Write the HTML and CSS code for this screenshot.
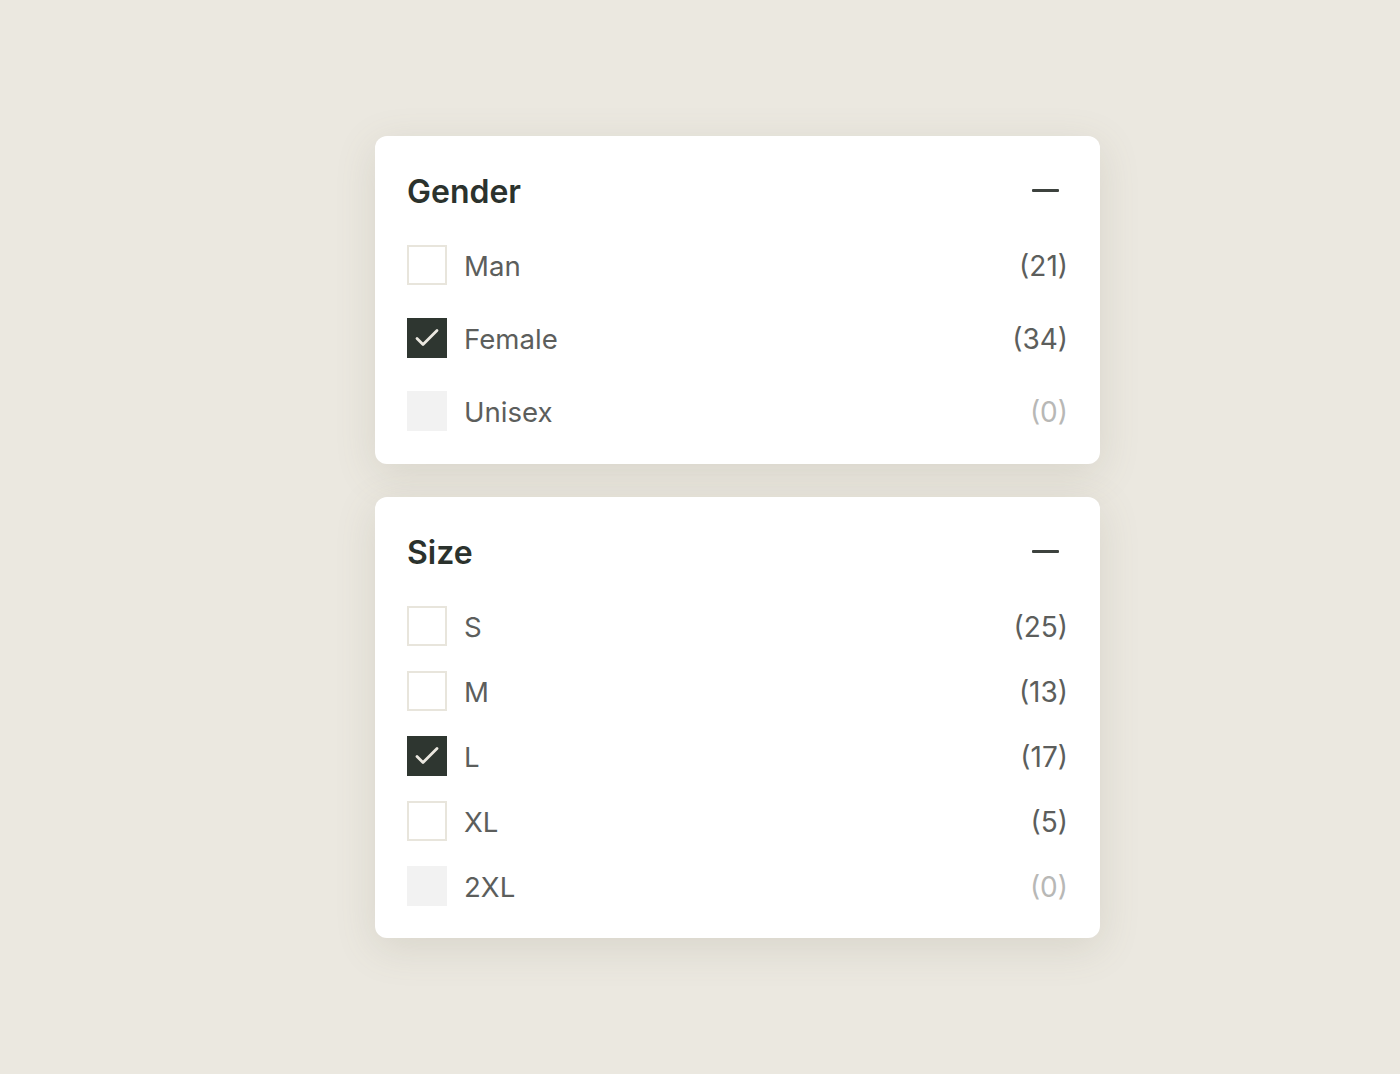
FILE: index.html
```html
<!DOCTYPE html>
<html>
<head>
<meta charset="utf-8">
<link rel="stylesheet" href="styles.css">
</head>
<body>
<main class="stack">
  <section class="card">
    <header class="card-head">
      <h2 class="title">Gender</h2>
      <span class="collapse" aria-label="Collapse"></span>
    </header>
    <ul class="options options-loose">
      <li class="option"><span class="box"></span><span class="label">Man</span><span class="count">(21)</span></li>
      <li class="option"><span class="box box-checked"><svg viewBox="0 0 40 40" width="40" height="40"><path d="M10 20.5 L16 26.5 L30 12.5" fill="none" stroke="#ebe8e0" stroke-width="2.8" stroke-linecap="round" stroke-linejoin="round"/></svg></span><span class="label">Female</span><span class="count">(34)</span></li>
      <li class="option option-disabled"><span class="box box-disabled"></span><span class="label">Unisex</span><span class="count">(0)</span></li>
    </ul>
  </section>
  <section class="card">
    <header class="card-head">
      <h2 class="title">Size</h2>
      <span class="collapse" aria-label="Collapse"></span>
    </header>
    <ul class="options options-tight">
      <li class="option"><span class="box"></span><span class="label">S</span><span class="count">(25)</span></li>
      <li class="option"><span class="box"></span><span class="label">M</span><span class="count">(13)</span></li>
      <li class="option"><span class="box box-checked"><svg viewBox="0 0 40 40" width="40" height="40"><path d="M10 20.5 L16 26.5 L30 12.5" fill="none" stroke="#ebe8e0" stroke-width="2.8" stroke-linecap="round" stroke-linejoin="round"/></svg></span><span class="label">L</span><span class="count">(17)</span></li>
      <li class="option"><span class="box"></span><span class="label">XL</span><span class="count">(5)</span></li>
      <li class="option option-disabled"><span class="box box-disabled"></span><span class="label">2XL</span><span class="count">(0)</span></li>
    </ul>
  </section>
</main>
</body>
</html>
```
FILE: styles.css
```css
* { box-sizing: border-box; }
html, body { margin: 0; padding: 0; }
body {
  background: #ebe8e0;
  font-family: Inter, "Noto Sans", sans-serif;
  min-height: 1074px;
}
.stack {
  width: 725px;
  margin-left: 375px;
  padding-top: 136px;
  display: flex;
  flex-direction: column;
  gap: 33px;
}
.card {
  background: #ffffff;
  border-radius: 12px;
  padding: 32px;
  box-shadow: 0 10px 40px rgba(120, 110, 90, 0.16);
}
.card:first-child { padding-bottom: 33px; }
.card-head {
  height: 46px;
  display: flex;
  align-items: center;
  justify-content: space-between;
  margin-bottom: 31px;
}
.title {
  margin: 0;
  font-size: 32px;
  font-weight: 600;
  color: #2b322d;
  line-height: 46px;
  padding-top: 2px;
}
.collapse {
  width: 27px;
  height: 3px;
  background: #3d423e;
  border-radius: 1px;
  margin-right: 9px;
  margin-top: -1px;
}
.options {
  list-style: none;
  margin: 0;
  padding: 0;
  display: flex;
  flex-direction: column;
}
.options-loose { gap: 33px; }
.options-tight { gap: 25px; }
.option {
  display: flex;
  align-items: center;
  height: 40px;
}
.box {
  width: 40px;
  height: 40px;
  flex: none;
  border: 2px solid #e8e5dc;
  background: #fff;
  display: block;
}
.box svg { display: block; margin: -2px; }
.box-checked { background: #2e3630; border-color: #2e3630; }
.box-disabled { background: #f2f2f2; border-color: #f2f2f2; }
.label {
  margin-left: 17px;
  font-size: 27.6px;
  color: #5c5e5c;
  flex: 1;
  padding-top: 2px;
}
.count {
  font-size: 28px;
  color: #5c5e5c;
  padding-top: 2px;
}
.option-disabled .count { color: #b8b8b6; }
```
